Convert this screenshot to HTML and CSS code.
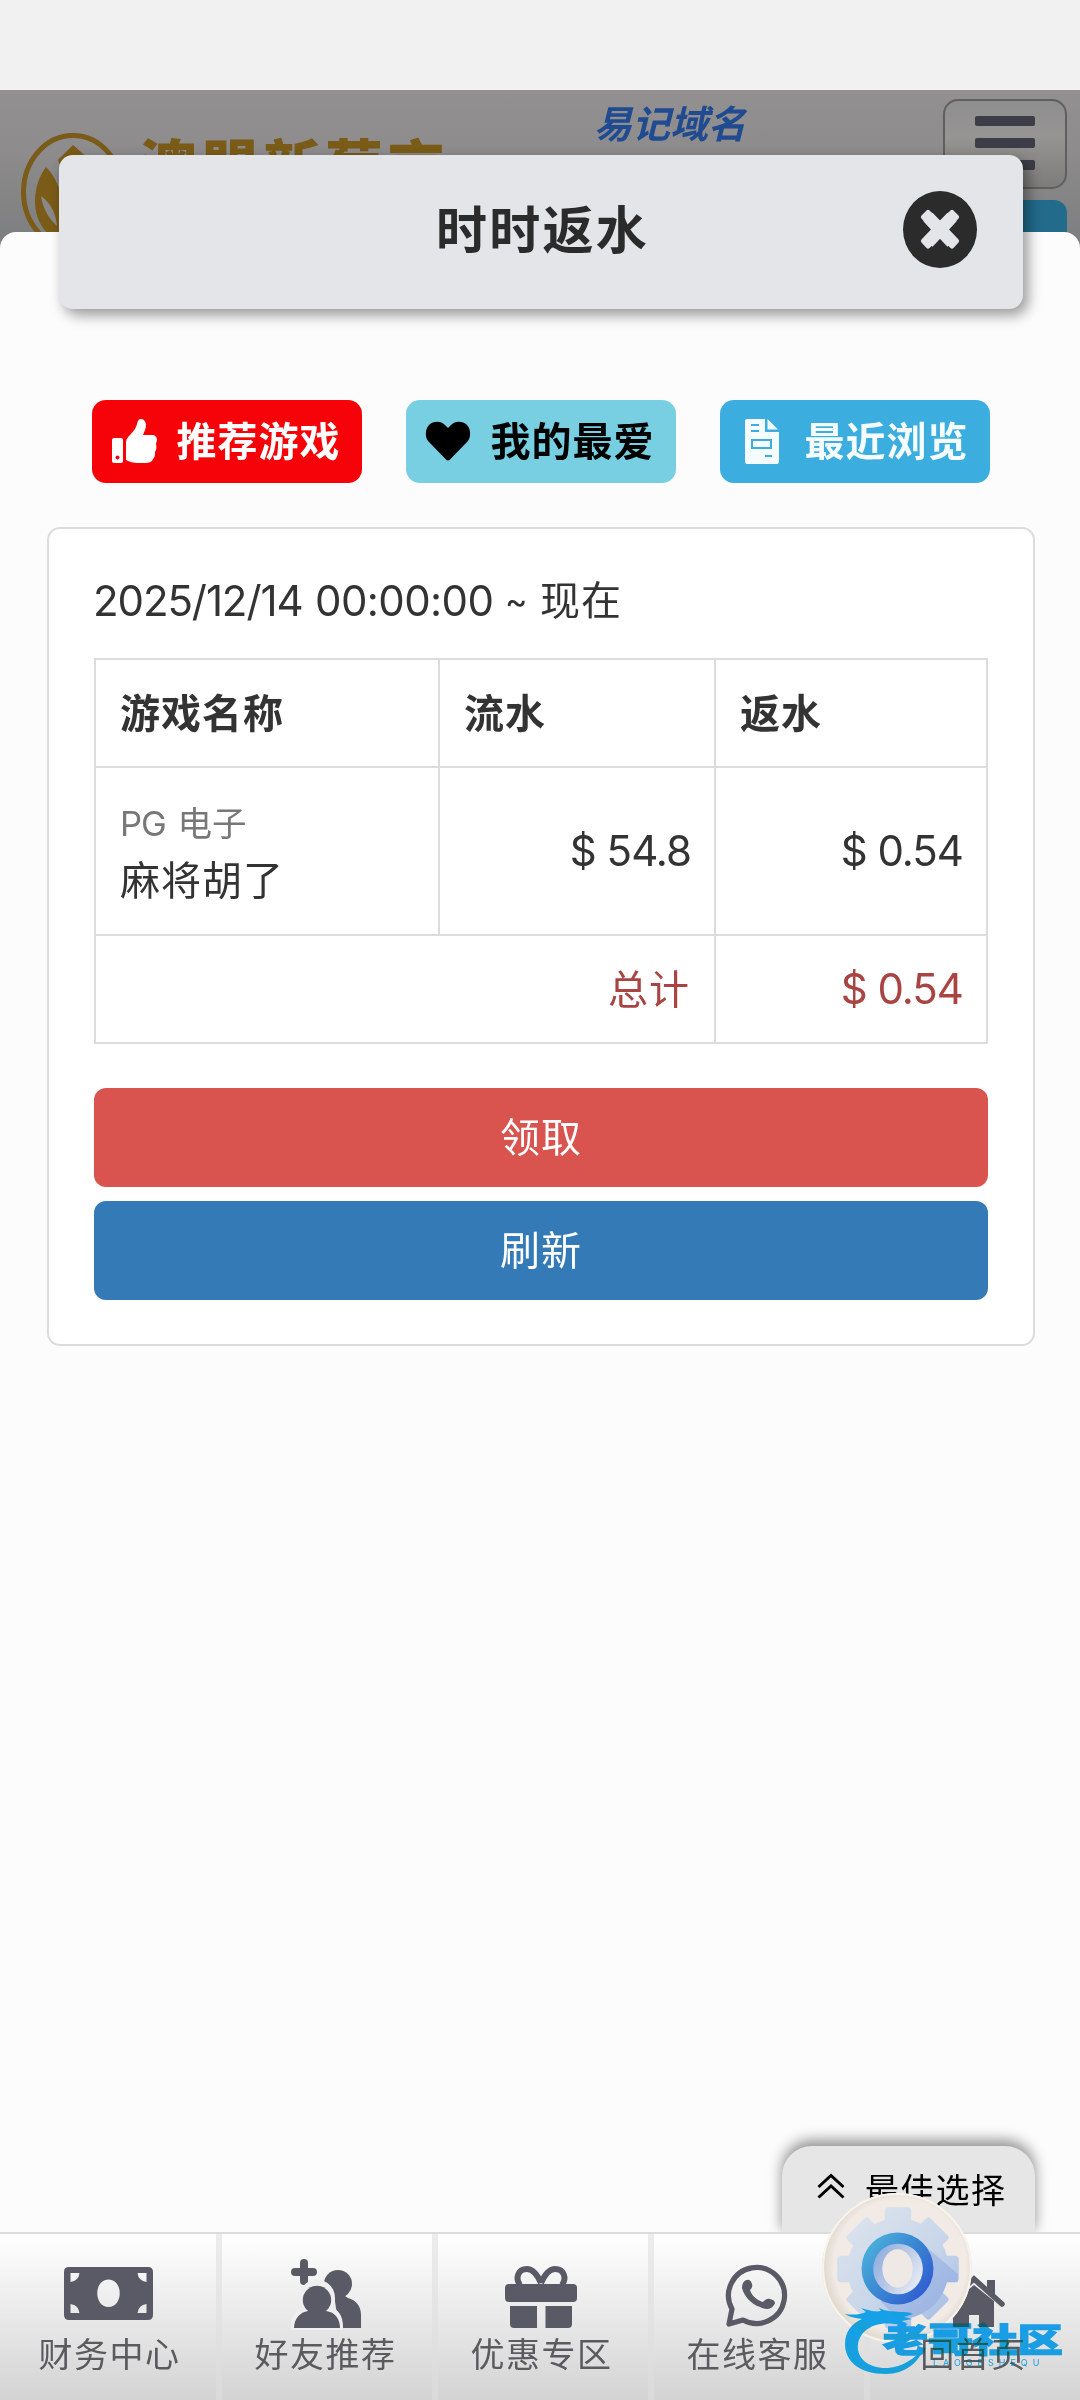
FILE: index.html
```html
<!DOCTYPE html>
<html lang="zh-CN">
<head>
    <meta charset="UTF-8">
    <meta name="viewport" content="width=device-width, initial-scale=1.0">
    <title>时时返水</title>
    <link rel="stylesheet" href="styles.css">
</head>
<body>
    <div class="status-bar"></div>

    <header class="site-header">
        <div class="brand">
            <svg class="brand-mark" viewBox="0 0 104 118" width="104" height="118">
                <ellipse cx="52" cy="59" rx="49.5" ry="56.5" fill="none" stroke="#7a5b17" stroke-width="5"/>
                <path d="M25 34c10 10 17 26 17 46v32C28 104 14 92 14 68c0-14 5-26 11-34z" fill="#7a5b17"/>
                <path d="M37 27L52 12l16 14v20H44z" fill="#7a5b17"/>
                <path d="M20 63c10 7 15 18 16 30-9-8-14-18-16-30z" fill="#8a8888"/>
            </svg>
            <span class="brand-name">澳盟新葡京</span>
        </div>
        <span class="domain">易记域名</span>
        <div class="header-actions">
            <div class="menu-btn"><i></i><i></i><i></i></div>
            <div class="header-btn"></div>
        </div>
    </header>

    <div class="dialog-title">
        <h1>时时返水</h1>
        <svg class="close" viewBox="0 0 74 77" width="74" height="77">
            <ellipse cx="37" cy="38.500" rx="37" ry="38.500" fill="#2b2b2b"/>
            <path d="M25 26L49 51.500M49 26L25 51.500" stroke="#e4e5e9" stroke-width="12.500"/>
            <path d="M26.500 19.500L37 29.500l10.500-10q1.500-1.500 3 0l5 5q1.500 1.500 0 3L46 38.500l9.500 10q1.500 1.500 0 3l-5 5.500q-1.500 1.500-3 0L37 47 26.500 57q-1.500 1.500-3 0l-5-5.500q-1.500-1.500 0-3L28 38.500l-9.500-11q-1.500-1.500 0-3l5-5q1.500-1.500 3 0z" fill="#e4e5e9"/>
        </svg>
    </div>

    <main class="sheet">
        <div class="tabs">
            <a class="tab tab-hot">
                <svg viewBox="0 0 46 46" width="46" height="46">
                    <path d="M3 20h7q2 0 2 2v21q0 2-2 2H3q-2 0-2-2V22q0-2 2-2z" fill="#fff"/>
                    <circle cx="6.500" cy="39.500" r="2" fill="#f50309"/>
                    <path d="M15 42V24q0-3 3-6c5-5 7-8 8-12 1-4 2-5 4-5 3 0 5 3 5 6 0 4-2 7-3 10h9c3 0 5 2 5 5 0 1-1 3-1 4 1 4 0 6-1 8 0 3 0 5-2 7-1 3-4 4-8 4h-7c-5 0-8-1-12-3z" fill="#fff"/>
                </svg>
                <span>推荐游戏</span>
            </a>
            <a class="tab tab-fav">
                <svg viewBox="0 0 46 46" width="46" height="46">
                    <path d="M23 42.500q-1 0-2-1L3 23C0 19 0 11 4 7c5-5 13-4 17 1l2 2 2-2c4-5 12-6 17-1 4 4 4 12 1 16L25 41.500q-1 1-2 1z" fill="#000"/>
                </svg>
                <span>我的最爱</span>
            </a>
            <a class="tab tab-recent">
                <svg viewBox="0 0 46 46" width="46" height="46">
                    <path fill="#f4fcff" fill-rule="evenodd" d="M8 1h18v13h14v29q0 3-2 3H8q-2 0-2-3V3q0-2 2-2zM12 6v2h8V6zM12 12v2h8v-2zM12 21v10h21V21zM26 37v2h7v-2z"/>
                    <path d="M28.500 1L39 11.500H28.500z" fill="#f4fcff"/>
                    <path d="M14 23h17v6H14z" fill="#f4fcff"/>
                </svg>
                <span>最近浏览</span>
            </a>
        </div>

        <section class="panel">
            <p class="period"><span class="date">2025/12/14</span><span class="time">00:00:00</span><span class="tilde">~</span><span class="now">现在</span></p>
            <table class="rebate">
                <colgroup><col class="c1"><col class="c2"><col class="c3"></colgroup>
                <tr class="head">
                    <th>游戏名称</th>
                    <th>流水</th>
                    <th>返水</th>
                </tr>
                <tr class="row">
                    <td>
                        <div class="vendor"><span>PG</span> 电子</div>
                        <div class="game">麻将胡了</div>
                    </td>
                    <td class="num">$ 54.8</td>
                    <td class="num">$ 0.54</td>
                </tr>
                <tr class="total">
                    <td class="label" colspan="2">总计</td>
                    <td class="num">$ 0.54</td>
                </tr>
            </table>
            <button class="btn btn-danger">领取</button>
            <button class="btn btn-primary">刷新</button>
        </section>
    </main>

    <div class="best-pick">
        <svg viewBox="0 0 28 26" width="28" height="26" fill="none" stroke="#000" stroke-width="3">
            <path d="M1.500 14L14 2.500 26.500 14M1.500 24.500L14 13l12.500 11.500"/>
        </svg>
        <span>最佳选择</span>
    </div>

    <nav class="bottom-nav">
        <a class="nav-item">
            <svg viewBox="0 0 90 72" width="90" height="72">
                <path fill="#5a5a66" fill-rule="evenodd" d="M5 9h79q5 0 5 5v43q0 5-5 5H5q-5 0-5-5V14q0-5 5-5zM6.500 15v9q8-1 9-9zM73.500 15q1 8 9 9v-9zM6.500 55h9q-1-8-9-9zM73.500 55h9v-9q-8 1-9 9zM44.500 21.500c-15 0-15 27.500 0 27.500s15-27.500 0-27.500z"/>
            </svg>
            <span>财务中心</span>
        </a>
        <a class="nav-item">
            <svg viewBox="0 0 72 72" width="72" height="72" fill="#5a5a66">
                <path d="M15 5v18M6 14h18" stroke="#5a5a66" stroke-width="8" stroke-linecap="round"/>
                <circle cx="49" cy="26" r="14"/>
                <path d="M44 30l15 10c8 2 13 8 13 17v13H50z"/>
                <path d="M5 69c0-11 5-16 13-18a15 15 0 1 1 20 0c9 2 13 9 13 18z" stroke="#efeff0" stroke-width="6" fill="#efeff0"/>
                <circle cx="28" cy="42" r="14.200"/>
                <path d="M5 70c0-9 6-16 14-17h18c9 1 14 8 14 17z"/>
            </svg>
            <span>好友推荐</span>
        </a>
        <a class="nav-item">
            <svg viewBox="0 0 72 72" width="72" height="72" fill="#5a5a66">
                <path d="M36 25C32 16 28 11 22 11c-9 0-12 9-7 16M36 25c4-9 8-14 14-14 9 0 12 9 7 16" fill="none" stroke="#5a5a66" stroke-width="6"/>
                <path d="M4 26h64q4 0 4 4v10q0 4-4 4H4q-4 0-4-4V30q0-4 4-4z"/>
                <path d="M5 48h27v22H9q-4 0-4-4zM40.500 48H67v18q0 4-4 4H40.500z"/>
            </svg>
            <span>优惠专区</span>
        </a>
        <a class="nav-item">
            <svg viewBox="0 0 64 72" width="64" height="72">
                <path d="M7 51A28 28 0 1 1 18 62L4 66z" fill="none" stroke="#5a5a66" stroke-width="5.200" stroke-linejoin="round"/>
                <path d="M18 25c3-5 8-4 9 1 1 3-1 5-2 6 2 6 7 10 13 12 2-2 4-4 7-3 5 1 6 4 4 6-3 5-8 5-14 2-9-3-16-11-18-19q0-3 1-5z" fill="#5a5a66"/>
            </svg>
            <span>在线客服</span>
        </a>
        <a class="nav-item">
            <svg viewBox="0 0 64 72" width="64" height="72">
                <path d="M12 44l21-17 20 16v26H38V57H28v12H12z" fill="#5a5a66"/>
                <path d="M3 47l30-26 28 25" fill="none" stroke="#5a5a66" stroke-width="5.500" stroke-linecap="round"/>
                <path d="M46 22h8v18l-8-7z" fill="#5a5a66"/>
            </svg>
            <span>回首页</span>
        </a>
    </nav>

    <div class="gear">
        <svg viewBox="0 0 150 150" width="152" height="152">
            <defs>
                <radialGradient id="disc" cx="0.52" cy="0.48" r="0.5">
                    <stop offset="0.88" stop-color="#f1eae5"/>
                    <stop offset="1" stop-color="#e2dcd3"/>
                </radialGradient>
                <linearGradient id="body" gradientUnits="userSpaceOnUse" x1="30" y1="25" x2="120" y2="125">
                    <stop offset="0" stop-color="#dbe2ec"/>
                    <stop offset="0.55" stop-color="#c9d7ea"/>
                    <stop offset="1" stop-color="#a9bfe5"/>
                </linearGradient>
                <linearGradient id="ring" x1="0" y1="0.2" x2="0.9" y2="0.9">
                    <stop offset="0" stop-color="#4cb2dc"/>
                    <stop offset="0.5" stop-color="#3a86d2"/>
                    <stop offset="1" stop-color="#2f5bd3"/>
                </linearGradient>
                <linearGradient id="core" x1="0" y1="0" x2="1" y2="0.6">
                    <stop offset="0" stop-color="#86a6dc"/>
                    <stop offset="0.6" stop-color="#bccbe8"/>
                    <stop offset="1" stop-color="#e3e9f3"/>
                </linearGradient>
            </defs>
            <circle cx="75" cy="75" r="74" fill="url(#disc)"/>
            <circle cx="75" cy="75" r="73" fill="none" stroke="#f8f4ec" stroke-width="2"/>
            <g fill="url(#body)">
                <circle cx="76" cy="76" r="50"/>
                <rect x="63" y="15" width="26" height="120" rx="4"/>
                <rect x="16" y="63" width="120" height="26" rx="4"/>
                <path d="M108 26l17 17q2 2 0 4L47 125q-2 2-4 0L26 108q-2-2 0-4L104 26q2-2 4 0z"/>
                <path d="M43 26L26 43q-2 2 0 4l78 78q2 2 4 0l17-17q2-2 0-4L47 26q-2-2-4 0z"/>
            </g>
            <path d="M98 49l37 32v8h-11c-4 18-18 34-48 37l-17-18z" fill="#7f9fde" opacity=".4"/>
            <circle cx="75.500" cy="75.500" r="35.500" fill="url(#ring)"/>
            <ellipse cx="76" cy="76" rx="24.500" ry="25" fill="url(#core)"/>
            <ellipse cx="75.500" cy="75.500" rx="15" ry="19" fill="#efe9e6"/>
        </svg>
    </div>

    <div class="stamp">
        <svg viewBox="0 0 90 66" width="90" height="66" fill="#16a0fb">
            <path d="M2 6c8 1 14 1 21-2l-5-4c10 3 14 4 20 3l-2-3c8 4 14 3 22 4 4 0 8 0 12 2l-9 3 8 2-10 2 6 4-14-1c-22-3-34 8-36 20-2 15 12 25 30 24 14-1 26-9 36-20-5 14-19 26-38 26C16 66 2 53 2 36 2 24 9 15 19 11 12 10 6 9 2 6z"/>
        </svg>
        <b class="stamp-name">老哥社区</b>
        <span class="stamp-sub">LAOGESHEQU</span>
    </div>
</body>
</html>
```
FILE: styles.css
```css
* {
    box-sizing: border-box;
}
body {
    font-family: Inter, "Noto Sans CJK SC", sans-serif;
    position: relative;
    display: flex;
    flex-direction: column;
    width: 1080px;
    height: 2400px;
    margin: 0;
    overflow: hidden;
    background: #fcfcfc;
    color: #333;
}
svg {
    display: block;
    flex: none;
}
.status-bar {
    height: 90px;
    flex: none;
    background: #f1f1f1;
}

/* dimmed page header behind the dialog */
.site-header {
    display: flex;
    align-items: flex-start;
    height: 160px;
    flex: none;
    padding: 9px 13px 0 21px;
    overflow: hidden;
    background: linear-gradient(#929090, #8d8b8b 40%, #7b7d7e);
}
.brand {
    display: flex;
    flex: none;
    padding-top: 34px;
    width: 573px;
}
.brand-name {
    margin: -2px 0 0 14px;
    font-family: "Noto Sans CJK SC", sans-serif;
    font-size: 58px;
    line-height: 64px;
    font-weight: 900;
    letter-spacing: 4px;
    white-space: nowrap;
    color: #7a5b17;
}
.domain {
    font-size: 38px;
    line-height: 51px;
    font-weight: 700;
    font-style: italic;
    color: #204b91;
}
.header-actions {
    display: flex;
    flex-direction: column;
    align-items: flex-end;
    gap: 11px;
    margin-left: auto;
}
.menu-btn {
    display: flex;
    flex-direction: column;
    align-items: center;
    gap: 12px;
    width: 124px;
    height: 90px;
    padding-top: 15px;
    border: 2px solid #5f5f5f;
    border-radius: 15px;
    background: linear-gradient(#8f8e8e, #969594 40%, #7d7c7b);
}
.menu-btn i {
    width: 60px;
    height: 10px;
    border-radius: 2px;
    background: #3d3d47;
}
.header-btn {
    width: 124px;
    height: 60px;
    border-radius: 13px;
    background: #226b8b;
}

.dialog-title {
    position: absolute;
    left: 59px;
    top: 155px;
    display: flex;
    align-items: center;
    justify-content: center;
    width: 964px;
    height: 154px;
    border-radius: 14px;
    background: #e4e5e9;
    box-shadow: 5px 6px 14px rgba(0, 0, 0, 0.4);
    z-index: 2;
}
.dialog-title h1 {
    margin: 0;
    padding: 0 0 3px 3px;
    font-size: 51px;
    line-height: 60px;
    font-weight: 700;
    letter-spacing: 2.2px;
    color: #2b2b2b;
}
.close {
    position: absolute;
    right: 46px;
    top: 36px;
}

.sheet {
    flex: 1;
    margin-top: -18px;
    padding: 168px 45px 0 47px;
    border-radius: 16px 16px 0 0;
    background: #fcfcfc;
}
.tabs {
    display: flex;
    justify-content: center;
    gap: 44px;
    padding-right: 1px;
}
.tab {
    display: flex;
    align-items: center;
    gap: 20px;
    width: 270px;
    height: 83px;
    padding-left: 19px;
    border-radius: 14px;
    font-size: 40px;
    font-weight: 700;
    letter-spacing: 1px;
    white-space: nowrap;
}
.tab svg {
    margin-bottom: 2px;
}
.tab span {
    padding-bottom: 5px;
}
.tab-hot {
    background: #f50309;
    color: #fff;
}
.tab-fav {
    background: #77cfe1;
    color: #000;
}
.tab-recent {
    background: #3badde;
    color: #f4fcff;
}

.panel {
    height: 819px;
    margin-top: 44px;
    padding: 42px 45px 0;
    border: 2px solid #dcdcdc;
    border-radius: 13px;
    background: #fff;
}
.period {
    display: flex;
    height: 60px;
    margin: 0 0 27px -1px;
    font-size: 42px;
    line-height: 60px;
    white-space: nowrap;
}
.period .date {
    width: 222px;
    letter-spacing: -1.1px;
}
.period .time {
    width: 190px;
    letter-spacing: -0.6px;
}
.period .tilde {
    width: 35px;
    font-size: 34px;
}
.period .now {
    font-size: 40px;
    letter-spacing: 1px;
}

.rebate {
    width: 894px;
    table-layout: fixed;
    border-collapse: collapse;
    font-size: 40px;
}
.rebate .c1 { width: 344px; }
.rebate .c2 { width: 276px; }
.rebate .c3 { width: 272px; }
.rebate th,
.rebate td {
    padding: 0 24px;
    border: 2px solid #dcdcdc;
    text-align: left;
}
.rebate th {
    padding-bottom: 5px;
    letter-spacing: 1px;
}
.rebate .head,
.rebate .total {
    height: 108px;
}
.rebate .row {
    height: 168px;
}
.rebate .row td:first-child {
    padding-top: 4px;
}
.rebate .num,
.rebate .label {
    text-align: right;
}
.rebate .label {
    padding-bottom: 5px;
    letter-spacing: 1px;
}
.rebate .num {
    padding-bottom: 2px;
    padding-right: 23px;
    font-size: 42px;
    letter-spacing: -1px;
}
.rebate .total td {
    color: #a94442;
}
.vendor {
    font-size: 34.5px;
    line-height: 56px;
    color: #777;
}
.vendor span {
    margin-right: 2px;
    letter-spacing: -1px;
}
.game {
    line-height: 58px;
    letter-spacing: 1px;
}

.btn {
    display: block;
    width: 894px;
    height: 99px;
    margin: 0;
    padding: 0 0 5px;
    border: 0;
    border-radius: 12px;
    font-family: inherit;
    font-size: 40px;
    letter-spacing: 1px;
    color: #fff;
}
.btn-danger {
    margin-top: 44px;
    background: #d9534f;
}
.btn-primary {
    margin-top: 14px;
    background: #337ab7;
}

.best-pick {
    position: absolute;
    left: 782px;
    top: 2146px;
    display: flex;
    gap: 20px;
    width: 253px;
    height: 90px;
    padding: 27px 0 0 35px;
    border-radius: 30px 30px 0 0;
    background: #e6e6e6;
    box-shadow: 0 -6px 14px rgba(0, 0, 0, 0.42);
    font-size: 34px;
    line-height: 36px;
    letter-spacing: 1.3px;
    white-space: nowrap;
    color: #000;
}

.bottom-nav {
    position: relative;
    display: flex;
    height: 168px;
    flex: none;
    border-top: 2px solid #dcdcdc;
    background: linear-gradient(#fff, #e9e9e9 50%, #d3d3d3);
}
.nav-item {
    display: flex;
    flex-direction: column;
    align-items: center;
    width: 216.5px;
    padding: 24px 0 0 2px;
    font-size: 34px;
    letter-spacing: 1.5px;
    white-space: nowrap;
    color: #5a5a5f;
}
.nav-item span {
    margin-top: 2px;
    padding-left: 1px;
    line-height: 46px;
}
.nav-item + .nav-item {
    background: linear-gradient(#ececec, #dadada) left / 6px 100% no-repeat;
}

/* floating settings ball */
.gear {
    position: absolute;
    left: 821px;
    top: 2192px;
    border-radius: 50%;
}

.stamp {
    position: absolute;
    left: 843px;
    top: 2308px;
    width: 230px;
    height: 70px;
    mix-blend-mode: darken;
    color: #1a9df8;
}
.stamp-name {
    position: absolute;
    left: 40px;
    top: 14px;
    font-size: 33px;
    line-height: 36px;
    font-weight: 900;
    -webkit-text-stroke: 1.5px #1a9df8;
    white-space: nowrap;
    transform: scaleX(1.36);
    transform-origin: left;
}
.stamp-sub {
    position: absolute;
    left: 90px;
    top: 50px;
    font-size: 9px;
    line-height: 10px;
    letter-spacing: 5px;
}
```
